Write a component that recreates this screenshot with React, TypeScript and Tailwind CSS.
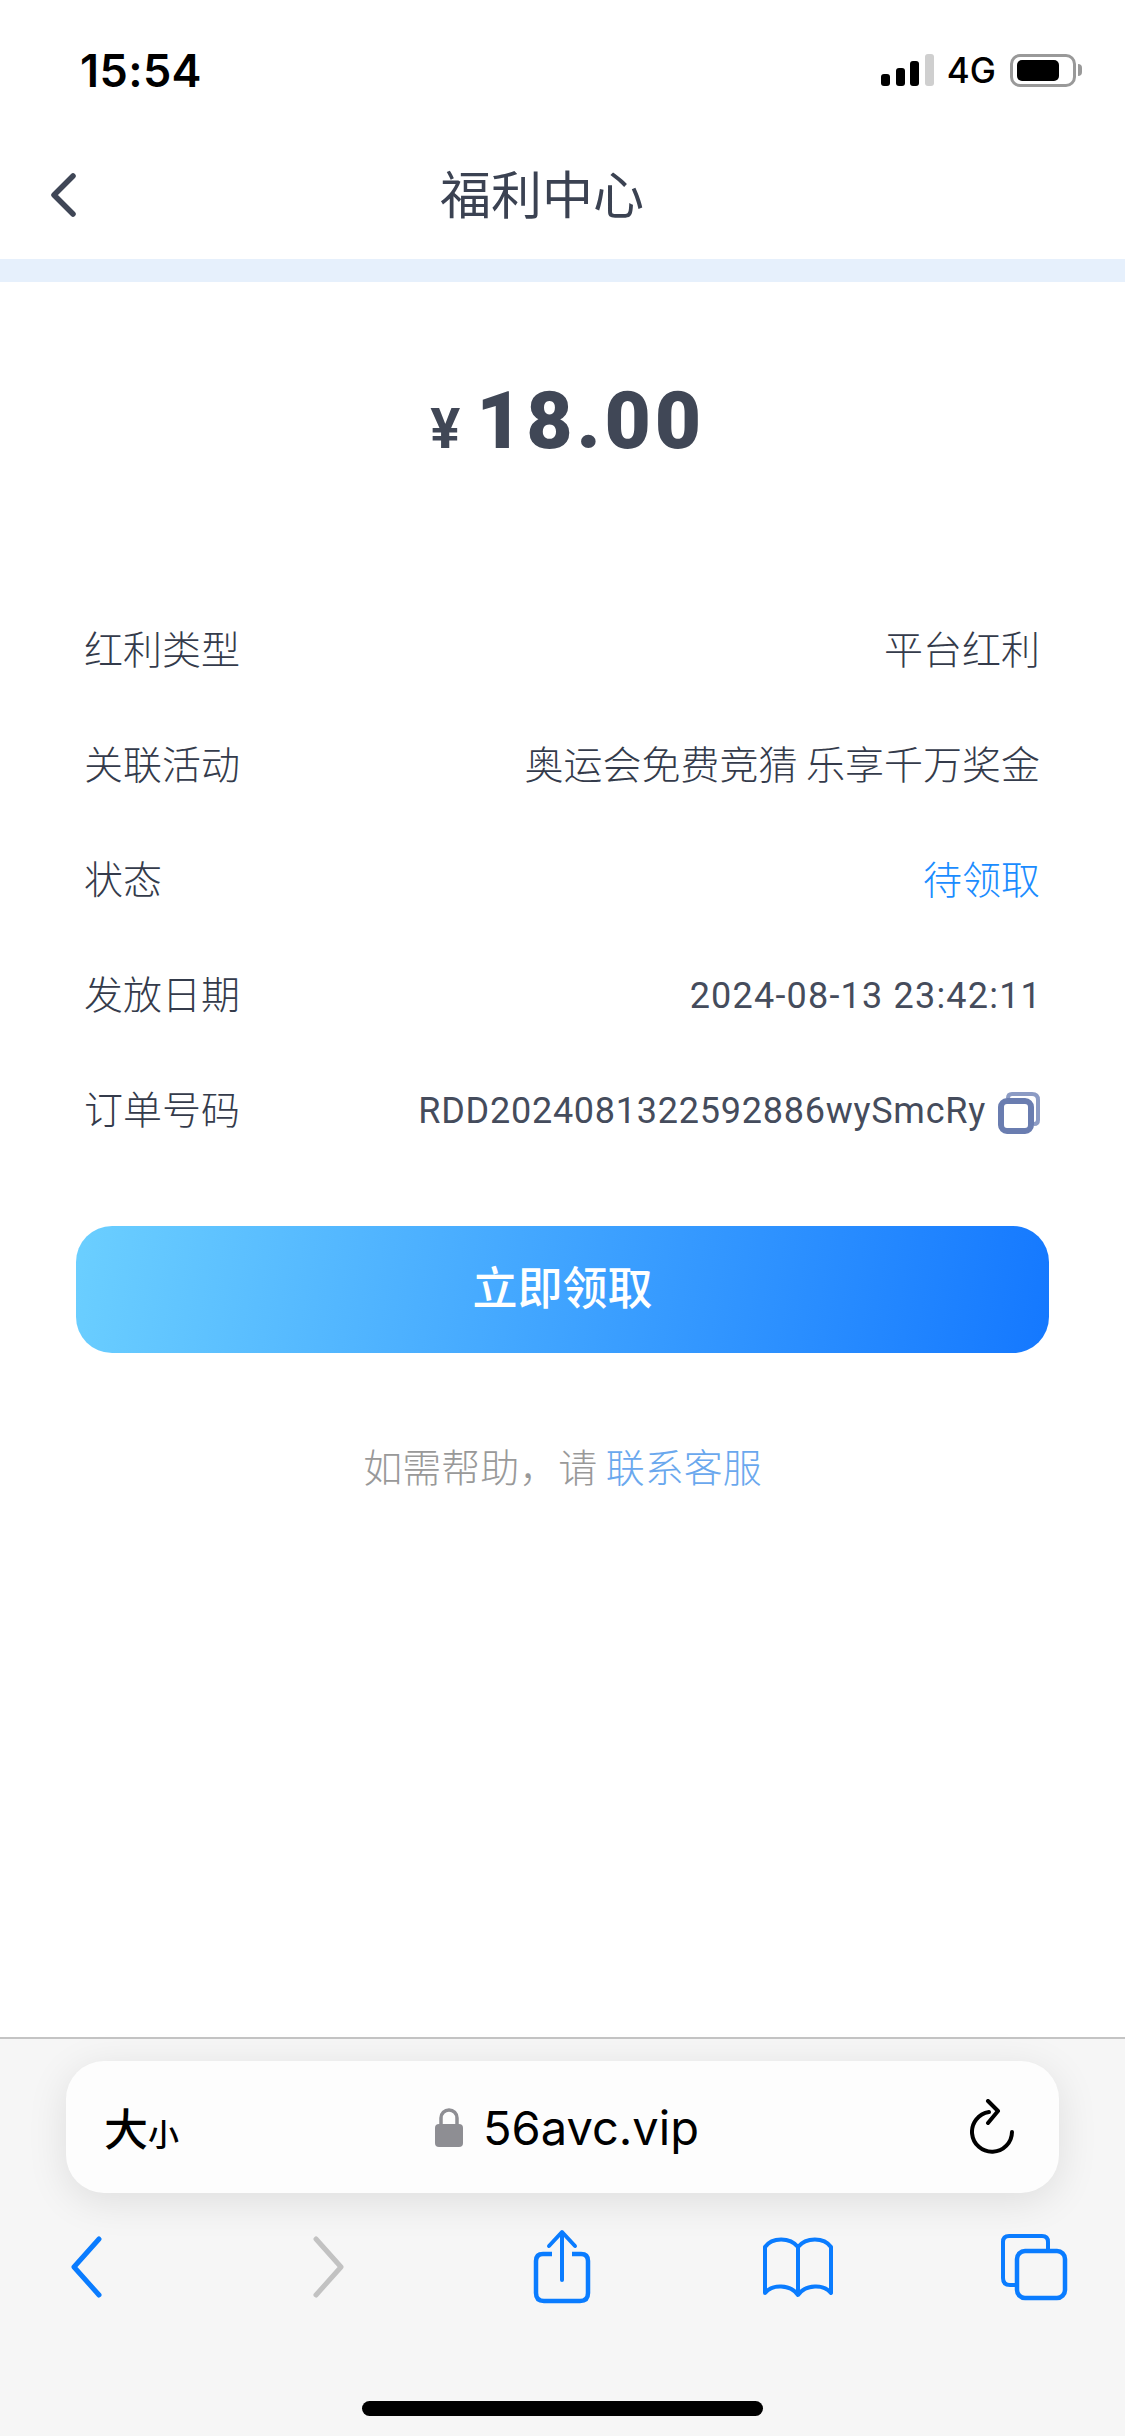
const rows = [
  { label: "红利类型", value: "平台红利" },
  { label: "关联活动", value: "奥运会免费竞猜 乐享千万奖金" },
  { label: "状态", value: "待领取", tone: "text-[#1a8cff] pb-[7px]" },
  { label: "发放日期", value: "2024-08-13 23:42:11", tone: "font-['Roboto',sans-serif] text-[36px] font-normal text-[#454c5c] tracking-[1.2px] mr-[-2px]" },
  { label: "订单号码", value: "RDD2024081322592886wySmcRy", tone: "font-['Roboto',sans-serif] text-[36px] font-normal text-[#454c5c] tracking-[0.75px]", copy: true },
];

function StatusBar() {
  return (
    <div className="flex h-[132px] items-center justify-between pl-[80px] pr-[43px] pt-[8px] font-['Inter','Liberation_Sans',sans-serif] text-black">
      <span className="text-[45px] font-semibold leading-none tracking-[0.4px]">15:54</span>
      <div className="flex items-center">
        <div className="flex h-[32px] items-end gap-[5.5px]">
          <div className="h-[12px] w-[9px] rounded-[3px] bg-black" />
          <div className="h-[18px] w-[9px] rounded-[3px] bg-black" />
          <div className="h-[25px] w-[9px] rounded-[3px] bg-black" />
          <div className="h-[32px] w-[9px] rounded-[3px] bg-[#cfcfcf]" />
        </div>
        <span className="ml-[13px] text-[35px] font-medium leading-none">4G</span>
        <div className="ml-[14px] flex h-[33px] w-[66px] items-center rounded-[10px] border-[3px] border-[#999999] pl-[4px]">
          <div className="h-[21px] w-[42px] rounded-[5px] bg-black" />
        </div>
        <div className="ml-[2px] h-[12px] w-[4px] rounded-r-[4px] bg-[#999999]" />
      </div>
    </div>
  );
}

function NavBar() {
  return (
    <div className="relative flex h-[127px] items-center justify-center pb-[7px] pr-[41px]">
      <svg className="absolute left-[47px] top-[41px]" width="32" height="44" viewBox="0 0 32 44" fill="none">
        <path d="M26 3 L7 22 L26 41" stroke="#3f4656" strokeWidth="5.5" strokeLinecap="round" strokeLinejoin="round" />
      </svg>
      <h1 className="text-[51px] font-normal leading-none text-[#3b4252]">福利中心</h1>
    </div>
  );
}

function CopyIcon() {
  return (
    <svg className="ml-[12px] mt-[5px] shrink-0" width="42" height="42" viewBox="0 0 42 42" fill="none">
      <path d="M10 6 Q10 2 14 2 H34 Q40 2 40 8 V28 Q40 32 36 32" stroke="#8c9bc4" strokeWidth="4" />
      <rect x="3" y="9" width="30" height="30" rx="6" stroke="#6a7db0" strokeWidth="6" />
    </svg>
  );
}

function Toolbar() {
  return (
    <div className="mt-[36px] flex items-center justify-between pl-[50px] pr-[55px]">
      <svg width="72" height="72" viewBox="0 0 72 72" fill="none">
        <path d="M49 8 L24 36 L49 64" stroke="#0a7cff" strokeWidth="5" strokeLinecap="round" strokeLinejoin="round" />
      </svg>
      <svg width="72" height="72" viewBox="0 0 72 72" fill="none">
        <path d="M29 8 L54 36 L29 64" stroke="#c2c2c2" strokeWidth="5" strokeLinecap="round" strokeLinejoin="round" />
      </svg>
      <svg width="72" height="76" viewBox="0 0 72 76" fill="none">
        <g transform="translate(3 0)">
          <path d="M26 25 H17 Q10 25 10 32 V64 Q10 72 18 72 H54 Q62 72 62 64 V32 Q62 25 55 25 H46" stroke="#0a7cff" strokeWidth="4.5" />
          <path d="M36 51 V4 M23 17 L36 3 L49 17" stroke="#0a7cff" strokeWidth="4" strokeLinecap="round" strokeLinejoin="round" />
        </g>
      </svg>
      <svg width="74" height="62" viewBox="0 0 74 62" fill="none">
        <g transform="translate(2 0)">
          <path d="M36 11 C28 1 10 1 3 11 V57 C10 48 28 48 36 59 C44 48 62 48 69 57 V11 C62 1 44 1 36 11 Z M36 11 V59" stroke="#0a7cff" strokeWidth="4" strokeLinejoin="round" />
        </g>
      </svg>
      <svg width="72" height="68" viewBox="0 0 72 68" fill="none">
        <path d="M19 52 H12 Q5 52 5 45 V9 Q5 3 11 3 H44 Q50 3 50 9 V18" stroke="#0a7cff" strokeWidth="4" />
        <rect x="19" y="18" width="48" height="47" rx="8" stroke="#0a7cff" strokeWidth="4.5" />
      </svg>
    </div>
  );
}

export default function App() {
  return (
    <div className="flex h-[2436px] w-[1125px] flex-col overflow-hidden bg-white font-['Noto_Sans_CJK_SC',sans-serif]">
      <StatusBar />
      <NavBar />
      <div className="h-[23px] bg-[#e6f0fc]" />

      <main className="flex-1">
        <div className="flex h-[278px] items-center justify-center pl-[10px] font-['Roboto','Liberation_Sans',sans-serif] text-[#404756]">
          <span className="mr-[16px] mt-[16px] text-[56px] font-bold leading-none">¥</span>
          <span className="text-[80px] font-black leading-none tracking-[3.8px]">18.00</span>
        </div>

        <div className="mt-[33px] pl-[84px] pr-[85px]">
          {rows.map((row) => (
            <div key={row.label} className="flex h-[115px] items-center justify-between text-[39px] font-light leading-none text-[#343b4b]">
              <span className="pb-[7px]">{row.label}</span>
              <div className="flex items-center">
                <span className={row.tone ?? "pb-[7px]"}>{row.value}</span>
                {row.copy && <CopyIcon />}
              </div>
            </div>
          ))}
        </div>

        <div className="mx-[76px] mt-[58px] flex h-[127px] w-[973px] items-center justify-center rounded-[36px] bg-[linear-gradient(100deg,#6bcfff,#1478ff)] pb-[9px] text-[45px] font-medium leading-none text-white">
          立即领取
        </div>

        <p className="mt-[82px] h-[60px] text-center text-[39px] font-light leading-[60px] text-[#999999]">
          如需帮助，请 <span className="text-[#6aa8ee]">联系客服</span>
        </p>
      </main>

      <div className="h-[399px] border-t-2 border-[#c4c4c4] bg-[#f6f6f6]">
        <div className="mx-[66px] mt-[22px] flex h-[132px] w-[993px] items-center justify-between rounded-[38px] bg-[#fdfdfd] pl-[38px] pr-[43px] shadow-[0_8px_40px_rgba(0,0,0,0.1)]">
          <div className="flex w-[80px] items-baseline text-black">
            <span className="text-[44px] font-medium leading-none">大</span>
            <span className="text-[31px] font-medium leading-none">小</span>
          </div>
          <div className="ml-[-20px] flex items-center">
            <svg width="28" height="40" viewBox="0 0 28 40" fill="none">
              <path d="M6 18 V11 a8 8 0 0 1 16 0 V18" stroke="#8e8e93" strokeWidth="3.5" />
              <rect x="0" y="17" width="28" height="23" rx="4" fill="#8e8e93" />
            </svg>
            <span className="ml-[20px] font-['Inter','Liberation_Sans',sans-serif] text-[47px] leading-none text-black">56avc.vip</span>
          </div>
          <svg width="46" height="56" viewBox="0 0 46 56" fill="none">
            <path d="M20 11 A20 20 0 1 0 43 31" stroke="#000" strokeWidth="4" strokeLinecap="round" transform="translate(-1 2)" />
            <path d="M18 2 L28 12 L18 24" stroke="#000" strokeWidth="4" strokeLinecap="round" strokeLinejoin="round" />
          </svg>
        </div>
        <Toolbar />
        <div className="mx-auto mt-[96px] h-[15px] w-[401px] rounded-full bg-black" />
      </div>
    </div>
  );
}
